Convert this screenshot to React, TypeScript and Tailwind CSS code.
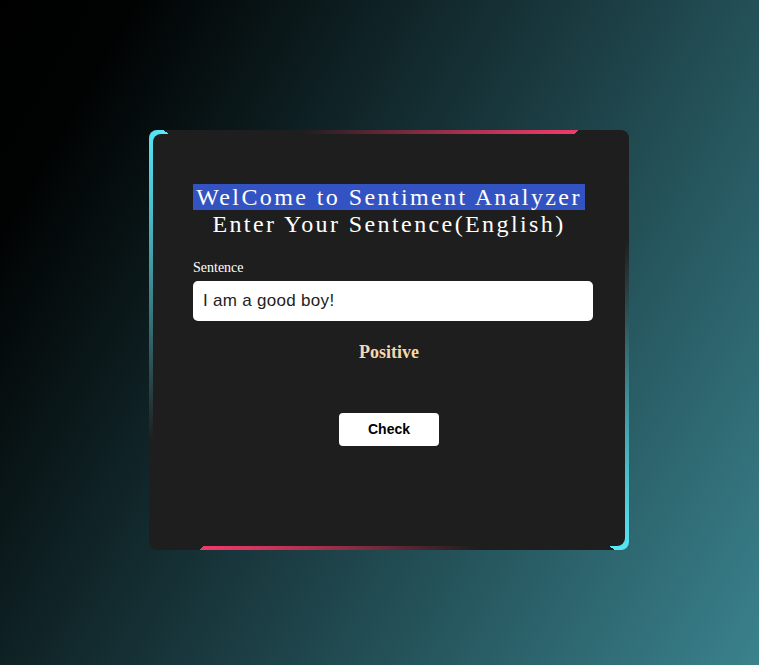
import { useState } from 'react';

const serif = "font-['Liberation_Serif','Times_New_Roman',serif]";
const sans = "font-['Liberation_Sans',Arial,sans-serif]";

export default function App() {
  const [sentence, setSentence] = useState('I am a good boy!');

  return (
    <div className="min-h-screen w-full flex items-center justify-center pl-[19px] pt-[15px] bg-[linear-gradient(120deg,#000_0%,#010303_12%,#1c3f45_55%,#3a828d_100%)]">
      <div className="w-[480px] h-[420px] rounded-lg p-1 flex bg-[conic-gradient(from_-23deg_at_50%_50%,#1e1e1e_0deg,#f03a6a_65deg,#1e1e1e_65deg,#1e1e1e_90deg,#58e8f8_156deg,#1e1e1e_156deg,#1e1e1e_180deg,#f03a6a_245deg,#1e1e1e_245deg,#1e1e1e_270deg,#58e8f8_336deg,#1e1e1e_336deg)]">
        <div className="flex-1 rounded-lg bg-[#1e1e1e] flex flex-col items-center pt-[50px]">
          <h2 className={`${serif} text-[24px] leading-[27px] tracking-[0.1em] text-white text-center font-normal`}>
            <span className="bg-[#3353c2] px-[3px]">WelCome to Sentiment Analyzer</span>
            <br />
            Enter Your Sentence(English)
          </h2>

          <div className="self-start ml-10 w-[400px] mt-[22px]">
            <label className={`${serif} block text-[14px] leading-[16px] text-white mb-[5px]`}>Sentence</label>
            <input
              value={sentence}
              onChange={(e) => setSentence(e.target.value)}
              className={`${sans} w-full h-10 rounded-[5px] bg-white px-[10px] text-[17px] tracking-[0.3px] text-[#222] outline-none`}
            />
          </div>

          <p className={`${serif} mt-[21px] text-[18px] leading-[20px] font-bold text-[#f6d8ae]`}>Positive</p>

          <button className={`${sans} mt-[51px] w-[100px] h-[33px] rounded-[4px] bg-white text-[14px] font-bold text-black`}>
            Check
          </button>
        </div>
      </div>
    </div>
  );
}
